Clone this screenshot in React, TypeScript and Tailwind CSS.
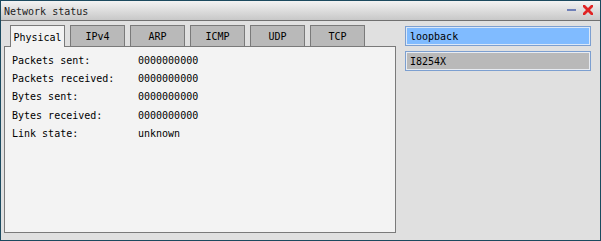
const tabs = ["Physical", "IPv4", "ARP", "ICMP", "UDP", "TCP"]

const stats: [string, string][] = [
  ["Packets sent:", "0000000000"],
  ["Packets received:", "0000000000"],
  ["Bytes sent:", "0000000000"],
  ["Bytes received:", "0000000000"],
  ["Link state:", "unknown"],
]

const font = { fontFamily: '"DejaVu Sans Mono", "Liberation Mono", monospace' }

export default function App() {
  return (
    <div
      className="flex h-[241px] w-[601px] flex-col border border-[#1c4a5f] bg-[#e0e0e0] text-[10px] text-black"
      style={font}
    >
      {/* title bar */}
      <div className="flex h-[20px] shrink-0 items-center border-b border-[#707070] bg-gradient-to-b from-[#f3f3f3] to-[#c8c8c8] pl-[3px] pr-[7px] pt-[2px]">
        <span className="leading-none text-[#222]">Network status</span>
        <div className="ml-auto flex items-center gap-[7px] -mt-[3px]">
          <div className="h-[2px] w-[9px] bg-[#6f80b8]" />
          <svg width="10" height="10" viewBox="0 0 10 10">
            <path d="M1 1 L9 9 M9 1 L1 9" stroke="#e02424" strokeWidth="2.8" strokeLinecap="square" />
          </svg>
        </div>
      </div>

      <div className="flex min-h-0 flex-1 pl-[3px] pr-[9px] pt-[4px]">
        {/* tabbed panel */}
        <div className="flex w-[392px] flex-col">
          <div className="relative z-10 ml-[6px] flex gap-[5px]">
            {tabs.map((t, i) =>
              i === 0 ? (
                <div
                  key={t}
                  className="-mb-px flex h-[22px] w-[55px] items-center justify-center border border-b-0 border-[#7a7a7a] bg-[#f3f3f3] pt-[1px]"
                >
                  {t}
                </div>
              ) : (
                <div
                  key={t}
                  className="flex h-[21px] w-[55px] items-center justify-center border border-b-0 border-[#7a7a7a] bg-[#b9b9b9]"
                >
                  {t}
                </div>
              ),
            )}
          </div>
          <div className="h-[187px] border border-[#7a7a7a] bg-[#f3f3f3] pl-[7px] pt-[4px]">
            {stats.map(([k, v]) => (
              <div key={k} className="flex h-[18.3px] items-center">
                <span className="w-[126px]">{k}</span>
                <span>{v}</span>
              </div>
            ))}
          </div>
        </div>

        {/* interface list */}
        <div className="ml-[9px] flex flex-1 flex-col gap-[5px] pt-[1px]">
          <div className="flex h-[20px] items-center border border-[#7c9fd0] bg-[#80bbff] pl-[4px] shadow-[inset_0_0_0_1px_#dbe8f8]">
            loopback
          </div>
          <div className="flex h-[20px] items-center border border-[#7c9fd0] bg-[#b9b9b9] pl-[4px] shadow-[inset_0_0_0_1px_#e8ecf2]">
            I8254X
          </div>
        </div>
      </div>
    </div>
  )
}
